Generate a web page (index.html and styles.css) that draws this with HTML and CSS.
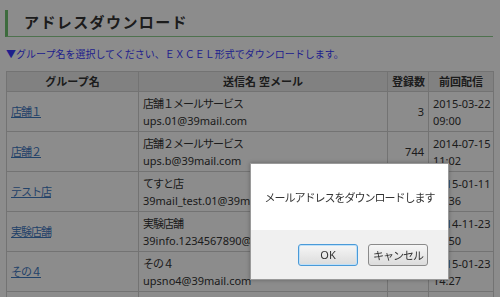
FILE: index.html
```html
<!DOCTYPE html>
<html lang="ja">
  <head>
    <meta charset="UTF-8" />
    <meta name="viewport" content="width=device-width, initial-scale=1.0" />
    <title>アドレスダウンロード</title>
    <link rel="stylesheet" href="styles.css">
  </head>

  <body>
    <div class="page">
      <h2 class="page-title">アドレスダウンロード</h2>
      <p class="guide">▼グループ名を選択してください、ＥＸＣＥＬ形式でダウンロードします。</p>

      <table class="group-table">
        <colgroup>
          <col class="col-name" />
          <col class="col-sender" />
          <col class="col-count" />
          <col class="col-date" />
        </colgroup>
        <thead>
          <tr>
            <th>グループ名</th>
            <th>送信名 空メール</th>
            <th>登録数</th>
            <th>前回配信</th>
          </tr>
        </thead>
        <tbody>
          <tr>
            <td><a href="#" class="jp">店舗１</a></td>
            <td><span class="jp">店舗１メールサービス</span><br />ups.01@39mail.com</td>
            <td class="num">3</td>
            <td>2015-03-22<br />09:00</td>
          </tr>
          <tr>
            <td><a href="#" class="jp">店舗２</a></td>
            <td><span class="jp">店舗２メールサービス</span><br />ups.b@39mail.com</td>
            <td class="num">744</td>
            <td>2014-07-15<br />11:02</td>
          </tr>
          <tr>
            <td><a href="#" class="jp">テスト店</a></td>
            <td><span class="jp">てすと店</span><br />39mail_test.01@39mail.com</td>
            <td class="num">12</td>
            <td>2015-01-11<br />10:36</td>
          </tr>
          <tr>
            <td><a href="#" class="jp">実験店舗</a></td>
            <td><span class="jp">実験店舗</span><br />39info.1234567890@39mail.com</td>
            <td class="num">5</td>
            <td>2014-11-23<br />15:50</td>
          </tr>
          <tr>
            <td><a href="#" class="jp">その４</a></td>
            <td><span class="jp">その４</span><br />upsno4@39mail.com</td>
            <td class="num">8</td>
            <td>2015-01-23<br />14:27</td>
          </tr>
          <tr>
            <td><a href="#" class="jp">その５</a></td>
            <td><span class="jp">その５</span><br />upsno5@39mail.com</td>
            <td class="num">2</td>
            <td>2015-01-30<br />12:00</td>
          </tr>
        </tbody>
      </table>
    </div>

    <!-- confirm dialog -->
    <div class="overlay"></div>
    <div class="dialog">
      <div class="dialog-body">
        <p class="jp">メールアドレスをダウンロードします</p>
      </div>
      <div class="dialog-footer">
        <button class="btn btn-ok">OK</button>
        <button class="btn jp">キャンセル</button>
      </div>
    </div>
  </body>
</html>
```

FILE: styles.css
```css
body {
  font-family: "Noto Sans", "Noto Sans CJK JP", sans-serif;
  font-size: 11px;
  color: #333;
  background-color: #ffffff;
  margin: 0;
  overflow: hidden;
}

.page {
  padding: 10px 7px 0 6px;
}

.jp {
  letter-spacing: -1px;
}

.page-title {
  margin: 0 0 0 -1px;
  height: 26px;
  line-height: 24px;
  padding-left: 16px;
  border-left: 3px solid #6fc36f;
  border-bottom: 1px solid #8fcf8f;
  font-size: 15px;
  letter-spacing: 1.4px;
  color: #333;
}

.guide {
  margin: 9px 0 0 0;
  height: 17px;
  line-height: 17px;
  font-size: 10px;
  color: #3a3aff;
}

.group-table {
  margin-top: 8px;
  width: 487px;
  table-layout: fixed;
  border-collapse: collapse;
}

.col-name {
  width: 132px;
}

.col-sender {
  width: 249px;
}

.col-count {
  width: 41px;
}

.col-date {
  width: 65px;
}

.group-table th,
.group-table td {
  border: 1px solid #d2d2d2;
  padding: 2px 4px;
  line-height: 17px;
  text-align: left;
  white-space: nowrap;
  overflow: hidden;
}

.group-table th {
  background-color: #ececec;
  text-align: center;
  font-weight: bold;
  height: 15px;
  padding: 1px 4px;
}

.group-table td {
  height: 35px;
}

.group-table a {
  color: #3f78c0;
  text-decoration: underline;
}

.group-table .num {
  text-align: right;
}

.overlay {
  position: fixed;
  inset: 0;
  background-color: rgba(0, 0, 0, 0.45);
}

.dialog {
  position: fixed;
  left: 250px;
  top: 163px;
  width: 197px;
  border: 1px solid #9a9a9a;
  background-color: #fff;
  box-shadow: 0 0 4px rgba(0, 0, 0, 0.3);
}

.dialog-body {
  height: 66px;
  display: flex;
  align-items: center;
  justify-content: center;
}

.dialog-body p {
  margin: 0 0 0 0;
  font-size: 11px;
  color: #333;
}

.dialog-footer {
  height: 49px;
  background-color: #f0f0f0;
  display: flex;
  justify-content: flex-end;
  align-items: center;
  gap: 10px;
  padding-right: 20px;
}

.btn {
  width: 60px;
  height: 22px;
  padding: 0;
  font-family: inherit;
  font-size: 11px;
  color: #333;
  border: 1px solid #8a8a8a;
  border-radius: 3px;
  background: linear-gradient(#f6f6f6, #dcdcdc);
  cursor: pointer;
}

.btn-ok {
  border-color: #4a9ad8;
  box-shadow: inset 0 0 0 1px #bfe0f8;
}
```
